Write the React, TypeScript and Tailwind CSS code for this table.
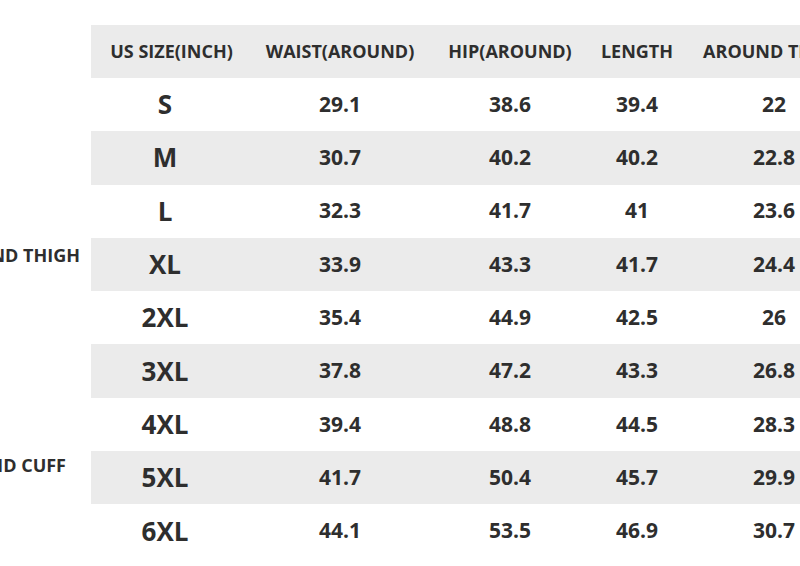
const rows = [
  ["S", "29.1", "38.6", "39.4", "22"],
  ["M", "30.7", "40.2", "40.2", "22.8"],
  ["L", "32.3", "41.7", "41", "23.6"],
  ["XL", "33.9", "43.3", "41.7", "24.4"],
  ["2XL", "35.4", "44.9", "42.5", "26"],
  ["3XL", "37.8", "47.2", "43.3", "26.8"],
  ["4XL", "39.4", "48.8", "44.5", "28.3"],
  ["5XL", "41.7", "50.4", "45.7", "29.9"],
  ["6XL", "44.1", "53.5", "46.9", "30.7"],
];

const headers = ["US SIZE(INCH)", "WAIST(AROUND)", "HIP(AROUND)", "LENGTH", "AROUND THIGH"];

export default function App() {
  return (
    <div className="w-[800px] h-[566px] overflow-hidden bg-white text-[#2e2e2e] flex" style={{ fontFamily: '"Open Sans", sans-serif' }}>
      {/* cut-off labels from the garment drawing */}
      <div className="w-[91px] shrink-0 relative">
        <div className="absolute right-[11px] top-[242px] whitespace-nowrap text-[18px] font-bold">AROUND THIGH</div>
        <div className="absolute right-[25px] top-[452px] whitespace-nowrap text-[18px] font-bold">AROUND CUFF</div>
      </div>

      <div className="pt-[25px] shrink-0">
        <div className="grid grid-cols-[161px_176px_164px_90px_184px] h-[53px] bg-[#ebebeb] items-center text-[18px] font-bold">
          {headers.map((h) => (
            <div key={h} className="text-center whitespace-nowrap">{h}</div>
          ))}
        </div>
        {rows.map((r, i) => (
          <div
            key={r[0]}
            className={`grid grid-cols-[161px_176px_164px_90px_184px] h-[53.3px] items-center ${i % 2 === 1 ? "bg-[#ebebeb]" : ""}`}
          >
            <div className="text-center pr-[13px] text-[26px] font-bold">{r[0]}</div>
            {r.slice(1).map((v, j) => (
              <div key={j} className="text-center text-[21px] font-bold">{v}</div>
            ))}
          </div>
        ))}
      </div>
    </div>
  );
}
